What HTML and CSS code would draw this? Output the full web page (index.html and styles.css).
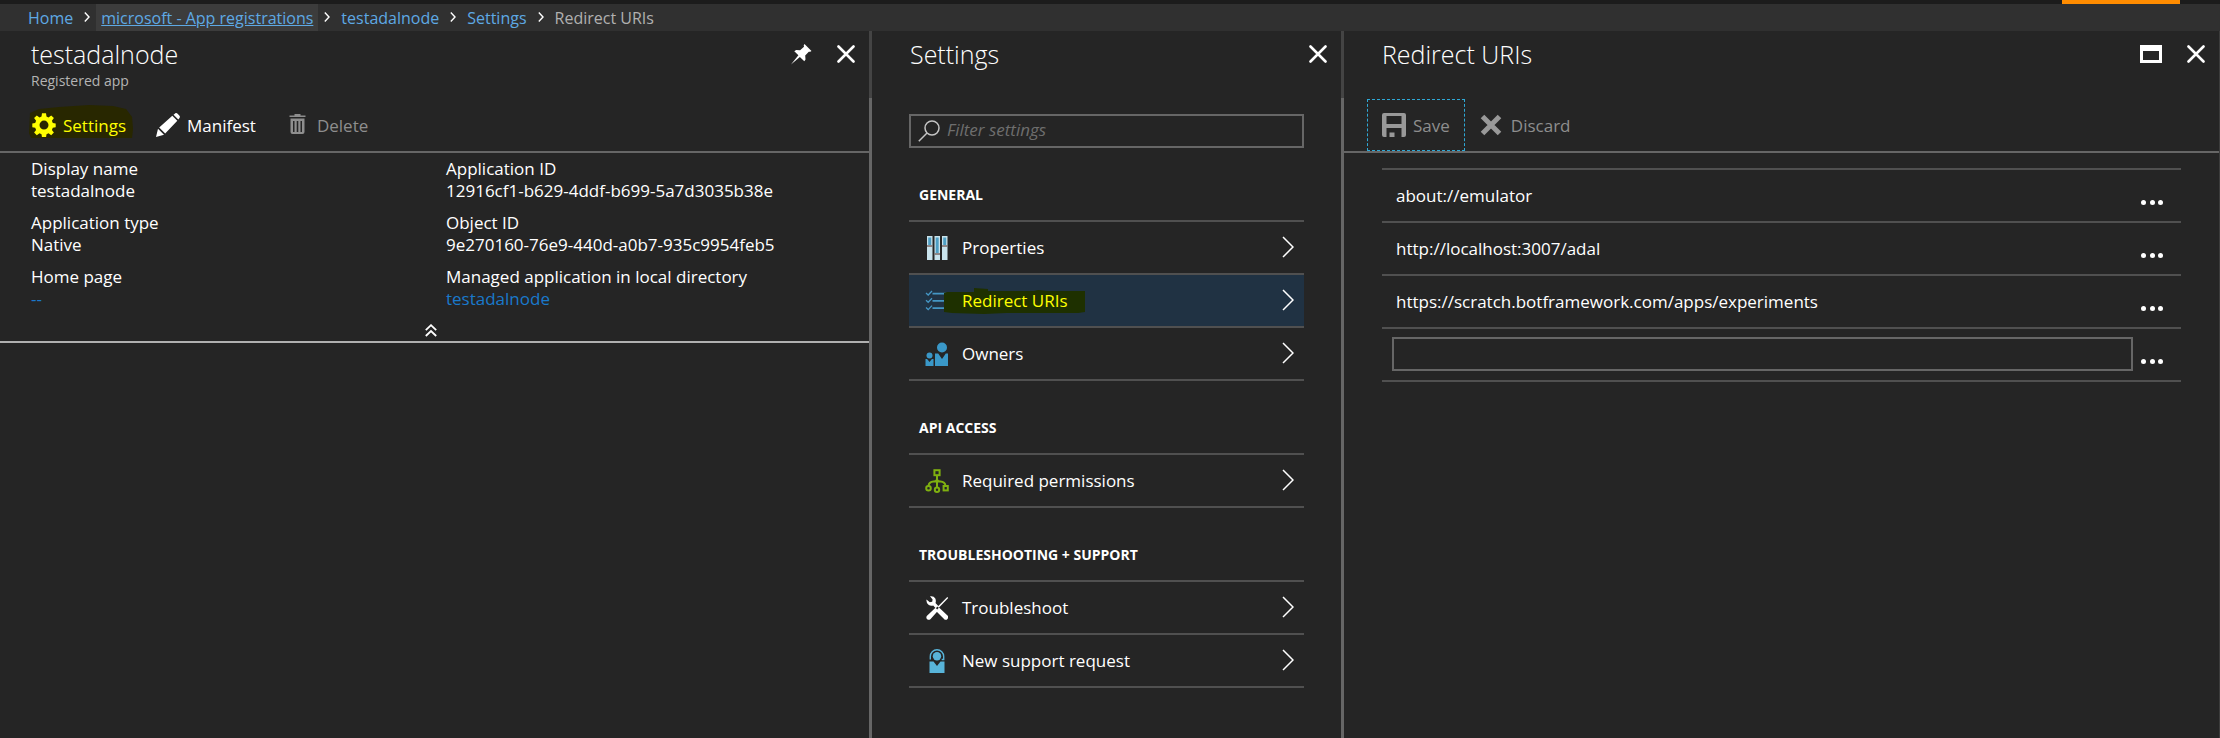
FILE: index.html
```html
<!DOCTYPE html>
<html lang="en">
<head>
<meta charset="utf-8">
<meta name="viewport" content="width=device-width, initial-scale=1">
<title>Redirect URIs</title>
<link rel="stylesheet" href="styles.css">
</head>
<body>
<div class="topbar"><span class="topbar-accent"></span></div>
<nav class="breadcrumb" aria-label="Breadcrumb">
  <a class="crumb" href="#">Home</a>
  <svg class="crumb-sep" viewBox="0 0 6 10"><path d="M.8.6 5 5 .8 9.400"/></svg>
  <a class="crumb crumb-active" href="#">microsoft - App registrations</a>
  <svg class="crumb-sep" viewBox="0 0 6 10"><path d="M.8.6 5 5 .8 9.400"/></svg>
  <a class="crumb" href="#">testadalnode</a>
  <svg class="crumb-sep" viewBox="0 0 6 10"><path d="M.8.6 5 5 .8 9.400"/></svg>
  <a class="crumb" href="#">Settings</a>
  <svg class="crumb-sep" viewBox="0 0 6 10"><path d="M.8.6 5 5 .8 9.400"/></svg>
  <span class="crumb crumb-current">Redirect URIs</span>
</nav>

<main class="blades">
  <section class="blade">
    <header class="blade-head">
      <div class="blade-titles">
        <h1 class="blade-title">testadalnode</h1>
        <p class="blade-subtitle">Registered app</p>
      </div>
      <div class="blade-actions">
        <button class="icon-button" aria-label="Pin">
          <svg width="22" height="22" viewBox="0 0 22 22"><path fill="#fff" d="M14.500 1 21.500 8l-1.300.8-1.400-.1-3.600 3.700.3 4.200-1.200 1.700-4.400-4.400L1 21.500l7.400-9.200-4.100-4 1.800-1.200 4 .1 3.900-3.500-.3-1.500z"/></svg>
        </button>
        <button class="icon-button" aria-label="Close">
          <svg width="18" height="18" viewBox="0 0 18 18"><path class="close-line" d="M1.500 1.500l15 15M16.500 1.500l-15 15"/></svg>
        </button>
      </div>
    </header>
    <div class="toolbar toolbar-inset">
      <button class="tool tool-marked">
        <svg class="marker" viewBox="0 0 104 34" preserveAspectRatio="none"><path d="M1 8 10 4 30 2 60 0 84 1 97 4 103 12 104 24 103 33H2L0 28z"/></svg>
        <svg class="tool-icon" viewBox="0 0 24 24"><path fill="#ff0" fill-rule="evenodd" d="M10 .3h4l.5 3.200 2 .9 2.700-2 2.700 2.700-2 2.700.9 2.100 2.900.5v3.900l-2.900.5-.9 2.100 2 2.700-2.700 2.700-2.700-2-2 .9-.5 3.200h-4l-.5-3.200-2-.9-2.700 2-2.700-2.700 2-2.700-.9-2.100-2.900-.5v-3.900l2.900-.5.9-2.100-2-2.700 2.700-2.700 2.700 2 2-.9zM12 7.600a4.500 4.500 0 1 0 0 9 4.500 4.500 0 0 0 0-9z"/></svg>
        <span class="tool-label">Settings</span>
      </button>
      <button class="tool">
        <svg class="tool-icon" viewBox="0 0 24 24"><path fill="#fff" d="M0 24l2-8.200 6 6zM3.200 14.600 16.300 2.800l5 5L9.200 20.600zM17.500 1.800l1.600-1.300c.8-.7 1.800-.5 2.500.2l1.700 1.800c.8.8.8 1.700.2 2.500l-1.200 1.600z"/></svg>
        <span class="tool-label">Manifest</span>
      </button>
      <button class="tool" disabled>
        <svg class="tool-icon" viewBox="0 0 24 24"><path fill="#8e8e8e" fill-rule="evenodd" d="M8.500 1h6v1.500h5V4h-16V2.500h5zM4.500 5.500h14V19q0 2-2 2h-10q-2 0-2-2zM7 8v11h1.500V8zM10.700 8v11h1.600V8zM14.500 8v11H16V8z"/></svg>
        <span class="tool-label">Delete</span>
      </button>
    </div>
    <div class="essentials">
      <dl class="facts">
        <div class="fact"><dt>Display name</dt><dd>testadalnode</dd></div>
        <div class="fact"><dt>Application ID</dt><dd>12916cf1-b629-4ddf-b699-5a7d3035b38e</dd></div>
        <div class="fact"><dt>Application type</dt><dd>Native</dd></div>
        <div class="fact"><dt>Object ID</dt><dd>9e270160-76e9-440d-a0b7-935c9954feb5</dd></div>
        <div class="fact"><dt>Home page</dt><dd><a href="#">--</a></dd></div>
        <div class="fact"><dt>Managed application in local directory</dt><dd><a href="#">testadalnode</a></dd></div>
      </dl>
      <button class="collapse" aria-label="Collapse essentials">
        <svg width="12" height="13" viewBox="0 0 12 13"><path d="M.8 6.200 6 1.200l5.200 5M.8 12 6 7l5.200 5"/></svg>
      </button>
    </div>
  </section>

  <section class="blade">
    <header class="blade-head">
      <div class="blade-titles"><h2 class="blade-title">Settings</h2></div>
      <div class="blade-actions">
        <button class="icon-button" aria-label="Close">
          <svg width="18" height="18" viewBox="0 0 18 18"><path class="close-line" d="M1.500 1.500l15 15M16.500 1.500l-15 15"/></svg>
        </button>
      </div>
    </header>
    <div class="settings">
      <label class="filter">
        <svg width="22" height="22" viewBox="0 0 22 22"><circle cx="14" cy="8" r="7"/><path d="M9 13 .8 21.200"/></svg>
        <input type="text" placeholder="Filter settings" aria-label="Filter settings">
      </label>

      <h3 class="group-title">GENERAL</h3>
      <ul class="group">
        <li><a class="item" href="#">
          <svg class="item-icon" viewBox="0 0 24 24"><path fill="#c9e3ec" d="M2 0h5.500v24H2zM9.500 0H15v24H9.500zM17 0h5.500v24H17z"/><path fill="#4f9fc4" d="M3.200 1.500h3V9h-3zM10.700 1.500h3V17h-3zM18.200 1.500h3V9h-3z"/><path fill="#7b6a66" d="M2 9.200h5.500v1.500H2zM9.500 17.200H15v1.500H9.500zM17 9.200h5.500v1.500H17z"/></svg>
          <span class="item-label">Properties</span>
          <svg class="item-arrow" viewBox="0 0 12 22"><path d="M1 1l10 10L1 21"/></svg>
        </a></li>
        <li><a class="item item-selected" href="#">
          <svg class="item-icon" viewBox="0 0 24 24"><path fill="none" stroke="#4496c4" stroke-width="1.300" d="M1 4l2.200 2L7 2M1 11.300l2.200 2L7 9.300M1 18.600l2.200 2L7 16.600"/><path fill="#4496c4" d="M7.500 3.700H23v1.800H7.500zM7.500 11H23v1.800H7.500zM7.500 18.300H23v1.800H7.500z"/></svg>
          <span class="item-label item-marked">
            <svg class="marker" viewBox="0 0 141 26" preserveAspectRatio="none"><path d="M0 5 3 4H30V0l14 1v2H90l4-1 10 1H141V24L134 25H62L40 26 8 25 0 24z"/></svg>
            <span class="item-text">Redirect URIs</span>
          </span>
          <svg class="item-arrow" viewBox="0 0 12 22"><path d="M1 1l10 10L1 21"/></svg>
        </a></li>
        <li><a class="item" href="#">
          <svg class="item-icon" viewBox="0 0 24 24"><g fill="#3a98c8"><circle cx="17" cy="5.500" r="5"/><circle cx="4.500" cy="13.500" r="3"/><path d="M10 11.500h3.200l3.800 5.500 3.800-5.500H23V24H10zM.5 17h1.600l2.400 3 2.400-3h1.600v7h-8z"/></g></svg>
          <span class="item-label">Owners</span>
          <svg class="item-arrow" viewBox="0 0 12 22"><path d="M1 1l10 10L1 21"/></svg>
        </a></li>
      </ul>

      <h3 class="group-title">API ACCESS</h3>
      <ul class="group">
        <li><a class="item" href="#">
          <svg class="item-icon" viewBox="0 0 24 24"><g fill="none" stroke="#7fb010" stroke-width="2"><rect x="9.400" y="1.200" width="5.200" height="5"/><path d="M12 6v12.500M3.500 17q.5-4.300 5-4.500 2.500 0 3.500-1.800 1 1.800 3.500 1.800 4.500.2 5 4.500"/><circle cx="3.500" cy="19.300" r="2.300"/><circle cx="12" cy="20.800" r="2.200"/><rect x="18.600" y="17" width="4.200" height="4.400"/></g></svg>
          <span class="item-label">Required permissions</span>
          <svg class="item-arrow" viewBox="0 0 12 22"><path d="M1 1l10 10L1 21"/></svg>
        </a></li>
      </ul>

      <h3 class="group-title">TROUBLESHOOTING + SUPPORT</h3>
      <ul class="group">
        <li><a class="item" href="#">
          <svg class="item-icon" viewBox="0 0 24 24"><path fill="#fff" d="M22.300 1 23.200 2 13.800 11.700 12.600 10.700zM10.500 11.700l2.700 2.700L5.400 23.200q-1.600 1.300-3.200 0-1.600-1.600-.2-3.400zM14 11.500l9 8.500v2.200l-1.200 1.500h-2L11 15zM5 .3q3.800-.6 5.300 2.300 1 2.200.2 4.300l2.800 3-2.600 2.300-2.500-2.700Q5.800 10.300 3.500 8.800 1 6.800 1.500 3.500L4.800 6.300l2.400-.5.400-2.400z"/></svg>
          <span class="item-label">Troubleshoot</span>
          <svg class="item-arrow" viewBox="0 0 12 22"><path d="M1 1l10 10L1 21"/></svg>
        </a></li>
        <li><a class="item" href="#">
          <svg class="item-icon" viewBox="0 0 24 24"><circle cx="12" cy="7.200" r="4.200" fill="#58b4d9"/><path fill="none" stroke="#58b4d9" stroke-width="1.400" d="M5.300 10.500V7.500a6.700 6.700 0 0 1 13.400 0v3h-2"/><path fill="#58b4d9" d="M4.500 12.500h4L12 17l3.500-4.500h4V24h-15z"/></svg>
          <span class="item-label">New support request</span>
          <svg class="item-arrow" viewBox="0 0 12 22"><path d="M1 1l10 10L1 21"/></svg>
        </a></li>
      </ul>
    </div>
  </section>

  <section class="blade blade-last">
    <header class="blade-head">
      <div class="blade-titles"><h2 class="blade-title">Redirect URIs</h2></div>
      <div class="blade-actions">
        <button class="icon-button" aria-label="Maximize">
          <svg width="22" height="18" viewBox="0 0 22 18"><path fill="#fff" fill-rule="evenodd" d="M0 0h22v18H0zM3 6v9h16V6z"/></svg>
        </button>
        <button class="icon-button" aria-label="Close">
          <svg width="18" height="18" viewBox="0 0 18 18"><path class="close-line" d="M1.500 1.500l15 15M16.500 1.500l-15 15"/></svg>
        </button>
      </div>
    </header>
    <div class="toolbar toolbar-wide">
      <button class="tool tool-muted tool-focused">
        <svg class="tool-icon" viewBox="0 0 24 24"><path fill="#999" fill-rule="evenodd" d="M2 0h20q2 0 2 2v20q0 2-2 2H2q-2 0-2-2V2q0-2 2-2zM4.500 3v8h15V3zM4.500 15v9h3v-4.500h5V24h7v-9z"/></svg>
        <span class="tool-label">Save</span>
      </button>
      <button class="tool tool-muted">
        <svg class="tool-icon" viewBox="0 0 24 24"><path stroke="#999" stroke-width="5" d="M2.500 3.500 19.500 20.500M19.500 3.500 2.500 20.500"/></svg>
        <span class="tool-label">Discard</span>
      </button>
    </div>
    <ul class="uris">
      <li class="uri"><span class="uri-text">about://emulator</span><button class="more" aria-label="More"><i></i><i></i><i></i></button></li>
      <li class="uri"><span class="uri-text">http://localhost:3007/adal</span><button class="more" aria-label="More"><i></i><i></i><i></i></button></li>
      <li class="uri"><span class="uri-text">https://scratch.botframework.com/apps/experiments</span><button class="more" aria-label="More"><i></i><i></i><i></i></button></li>
      <li class="uri"><input class="uri-input" type="text" aria-label="New redirect URI"><button class="more" aria-label="More"><i></i><i></i><i></i></button></li>
    </ul>
  </section>
</main>
</body>
</html>
```
FILE: styles.css
```css
* { box-sizing: border-box; }

body {
  margin: 0;
  min-height: 100vh;
  display: flex;
  flex-direction: column;
  background: #252525;
  color: #fff;
  font: 17px/22px "Segoe UI", "Open Sans", "Noto Sans", sans-serif;
}

h1, h2, h3, p, dl, dd, ul { margin: 0; padding: 0; }
ul { list-style: none; }
svg { display: block; flex: none; }
a { color: inherit; text-decoration: none; }
button { background: none; border: 0; padding: 0; color: inherit; font: inherit; }

.topbar {
  display: flex;
  justify-content: flex-end;
  height: 4px;
  padding-right: 40px;
  background: #1c1c1c;
}
.topbar-accent { width: 118px; background: #ff8c00; }

.breadcrumb {
  display: flex;
  align-items: center;
  height: 27px;
  padding-left: 23px;
  background: #303030;
  font-size: 16px;
}
.crumb { padding: 2px 5px 0; line-height: 25px; color: #5ea9e4; }
.crumb-active { background: #3c3c3c; text-decoration: underline; }
.crumb-current { color: #b0b0b0; }
.crumb-sep { width: 6px; height: 10px; margin: 0 6px 2px; fill: none; stroke: #fff; stroke-width: 1.400; }

.blades { flex: 1; display: grid; grid-template-columns: 872fr 472fr 876fr; }
.blade {
  min-width: 0;
  border-right: 3px solid;
  border-image: linear-gradient(#444 68px, #666 68px) 1;
}
.blade-last { border-right: 1px solid #3c3c3c; border-image: none; }

.blade-head { display: flex; justify-content: space-between; height: 68px; padding: 7px 14px 0 31px; }
.blade-title { font-size: 25px; font-weight: 300; line-height: 33px; }
.blade-subtitle { font-size: 14px; font-weight: 500; line-height: 20px; color: #b4b4b4; }
.blade-actions { display: flex; align-items: flex-start; gap: 25px; padding-top: 7px; }
.blade .icon-button { display: flex; align-items: center; height: 18px; }
.close-line { fill: none; stroke: #fff; stroke-width: 2.600; stroke-linecap: round; }
.blade + .blade .blade-head { padding-left: 38px; }

.toolbar { display: flex; height: 54px; border-bottom: 2px solid #666; }
.toolbar-inset { padding-left: 17px; }
.toolbar-wide { padding-left: 23px; }
.tool { display: flex; align-items: center; gap: 7px; padding: 0 15px; position: relative; }
.tool-icon { position: relative; width: 24px; height: 24px; }
.tool-label { position: relative; padding-top: 2px; }
.tool:disabled, .tool-muted { color: #8e8e8e; }
.tool-focused { outline: 1px dashed #2fa8d5; outline-offset: -1px; }
.tool-marked { color: #ff0; }
.marker { position: absolute; }
.tool-marked .marker { inset: 6px 8px 12px 12px; width: calc(100% - 20px); height: 34px; fill: #282700; }

.essentials { padding: 5px 0 0 31px; border-bottom: 2px solid #b0b0b0; }
.facts { display: grid; grid-template-columns: 415fr 423fr; row-gap: 10px; }
.fact a { color: #1a79cb; }
.collapse { display: flex; justify-content: center; width: calc(100% - 38px); padding: 14px 0 4px; }
.collapse svg { fill: none; stroke: #fff; stroke-width: 1.800; }

.settings { padding: 15px 37px 0 37px; }
.filter {
  display: flex;
  align-items: center;
  gap: 7px;
  height: 34px;
  padding: 0 7px;
  border: 2px solid #666;
}
.filter svg { fill: none; stroke: #c4c4c4; stroke-width: 1.500; }
.filter input { flex: 1; min-width: 0; padding: 0 0 2px; border: 0; background: none; color: #fff; font: inherit; outline: 0; }
.filter input::placeholder { color: #6e6e6e; font-style: italic; opacity: 1; }

.group-title { padding: 35px 10px 13px; font-size: 14px; line-height: 24px; font-weight: 700; }
.group { border-top: 2px solid #505050; }
.item { display: flex; align-items: center; height: 53px; padding: 0 10px 0 16px; border-bottom: 2px solid #505050; }
.item-selected { background: #203243; }
.item-icon { width: 24px; height: 24px; margin-right: 13px; }
.item-label { flex: 1; position: relative; }
.item-marked { color: #ff0; }
.item-marked .marker { left: -18px; top: -2px; width: 141px; height: 26px; fill: #1e3000; }
.item-text { position: relative; }
.item-arrow { width: 12px; height: 22px; margin-bottom: 2px; fill: none; stroke: #fff; stroke-width: 1.500; }

.uris { margin: 15px 38px 0; border-top: 2px solid #505050; }
.uri { display: flex; align-items: center; justify-content: space-between; height: 53px; padding: 0 18px 0 10px; border-bottom: 2px solid #505050; }
.uri-text { padding-left: 4px; }
.uri-input { flex: 1; min-width: 0; height: 34px; margin-right: 8px; margin-bottom: 1px; border: 2px solid #666; background: none; color: #fff; font: inherit; }
.more { display: flex; justify-content: space-between; width: 22px; padding-top: 13px; }
.more i { width: 5px; height: 5px; border-radius: 50%; background: #fff; }
```
